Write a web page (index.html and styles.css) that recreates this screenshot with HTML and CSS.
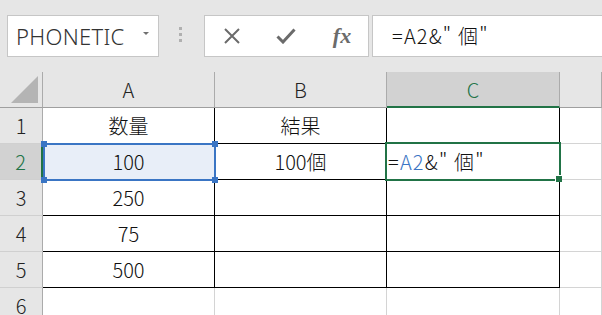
FILE: index.html
```html
<!DOCTYPE html>
<html lang="ja">

<head>
    <meta charset="UTF-8">
    <meta name="viewport" content="width=device-width, initial-scale=1.0">
    <title>Excel | 文字列の連結</title>
    <link rel="stylesheet" href="styles.css">
</head>

<body>
    <div class="toolbar">
        <div class="namebox">
            <span>PHONETIC</span>
            <span class="caret"></span>
        </div>
        <div class="grip"><i></i><i></i><i></i></div>
        <div class="fx-buttons">
            <span class="fx-btn">
                <svg width="18" height="16" viewBox="0 0 18 16">
                    <path d="M2 1 L16 15 M16 1 L2 15" stroke="#6b6b6b" stroke-width="2" fill="none" />
                </svg>
            </span>
            <span class="fx-btn">
                <svg width="20" height="16" viewBox="0 0 20 16">
                    <path d="M1.5 8.5 L7 14 L18.5 1.5" stroke="#6b6b6b" stroke-width="3" fill="none" />
                </svg>
            </span>
            <span class="fx-btn fx-label">fx</span>
        </div>
        <div class="formula">=A2&amp;" 個"</div>
    </div>

    <div class="sheet">
        <div class="head corner">
            <svg width="28" height="28" viewBox="0 0 28 28">
                <polygon points="27,0 27,27 0,27" fill="#b4b4b4" />
            </svg>
        </div>
        <div class="head">A</div>
        <div class="head">B</div>
        <div class="head active">C</div>
        <div class="head"></div>

        <div class="rowhead">1</div>
        <div class="cell table">数量</div>
        <div class="cell table">結果</div>
        <div class="cell table"></div>
        <div class="cell"></div>

        <div class="rowhead active">2</div>
        <div class="cell table ref">100</div>
        <div class="cell table">100個</div>
        <div class="cell table left">=<span class="ref-text">A2</span>&amp;" 個"</div>
        <div class="cell"></div>

        <div class="rowhead">3</div>
        <div class="cell table">250</div>
        <div class="cell table"></div>
        <div class="cell table"></div>
        <div class="cell"></div>

        <div class="rowhead">4</div>
        <div class="cell table">75</div>
        <div class="cell table"></div>
        <div class="cell table"></div>
        <div class="cell"></div>

        <div class="rowhead">5</div>
        <div class="cell table">500</div>
        <div class="cell table"></div>
        <div class="cell table"></div>
        <div class="cell"></div>

        <div class="rowhead">6</div>
        <div class="cell"></div>
        <div class="cell"></div>
        <div class="cell"></div>
        <div class="cell"></div>

        <!-- formula reference highlight on A2 -->
        <div class="ref-box">
            <i class="h tl"></i><i class="h tr"></i><i class="h bl"></i><i class="h br"></i>
        </div>
        <!-- active cell C2 -->
        <div class="sel-box"><i class="fill"></i></div>
    </div>
</body>

</html>
```

FILE: styles.css
```css
* {
    box-sizing: border-box;
}

body {
    margin: 0;
    background-color: #e6e6e6;
    font-family: "Noto Sans CJK JP", "Noto Sans", sans-serif;
    font-weight: 300;
    color: #111111;
    overflow: hidden;
}

.toolbar {
    display: flex;
    align-items: flex-start;
    height: 72px;
    padding: 15px 0 0 7px;
}

.namebox {
    display: flex;
    align-items: center;
    justify-content: space-between;
    width: 152px;
    height: 42px;
    padding: 0 9px 0 8px;
    background-color: #ffffff;
    border: 1px solid #c6c6c6;
    font-family: "Noto Sans", sans-serif;
    font-size: 22px;
    letter-spacing: 0.3px;
    color: #333333;
}

.caret {
    width: 0;
    height: 0;
    border-left: 3px solid transparent;
    border-right: 3px solid transparent;
    border-top: 3px solid #707070;
    margin-top: -6px;
}

.grip {
    display: flex;
    flex-direction: column;
    gap: 3px;
    margin: 12px 22px 0 20px;
}

.grip i {
    width: 3px;
    height: 3px;
    background-color: #b0b0b0;
}

.fx-buttons {
    display: flex;
    width: 165px;
    height: 42px;
    background-color: #ffffff;
    border: 1px solid #c6c6c6;
}

.fx-btn {
    display: flex;
    align-items: center;
    justify-content: center;
    width: 54px;
}

.fx-label {
    font-family: "Liberation Serif", serif;
    font-style: italic;
    font-weight: bold;
    font-size: 22px;
    color: #6b6b6b;
    padding-left: 4px;
}

.formula {
    flex: 1;
    height: 42px;
    margin-left: 3px;
    padding: 5px 0 0 19px;
    background-color: #ffffff;
    border: 1px solid #c6c6c6;
    border-right: none;
    font-size: 20px;
    letter-spacing: 1.2px;
    color: #111111;
}

.sheet {
    position: relative;
    display: grid;
    grid-template-columns: 43px 172px 172px 173px 1fr;
    grid-auto-rows: 36px;
    background-color: #ffffff;
}

.head,
.rowhead,
.cell {
    display: flex;
    align-items: center;
    justify-content: center;
    font-size: 20px;
}

.head {
    background-color: #e6e6e6;
    border-right: 1px solid #ababab;
    border-bottom: 1px solid #9f9f9f;
    color: #222222;
}

.corner {
    justify-content: flex-end;
    align-items: flex-end;
    padding: 0 3px 3px 0;
}

.head.active {
    background-color: #d2d2d2;
    color: #217346;
    border-bottom: 2px solid #217346;
}

.rowhead {
    background-color: #e6e6e6;
    border-right: 1px solid #ababab;
    border-bottom: 1px solid #d0d0d0;
    color: #222222;
}

.rowhead.active {
    background-color: #d2d2d2;
    color: #217346;
    border-right: 2px solid #217346;
}

.cell {
    border-right: 1px solid #d4d4d4;
    border-bottom: 1px solid #d4d4d4;
    color: #111111;
}

.cell.table {
    border-right-color: #000000;
    border-bottom-color: #000000;
}

.cell.ref {
    background-color: #e8eef8;
}

.cell.left {
    justify-content: flex-start;
    padding-left: 1px;
    letter-spacing: 1.2px;
}

.ref-text {
    color: #3a75c4;
}

.ref-box {
    position: absolute;
    left: 43px;
    top: 71px;
    width: 173px;
    height: 38px;
    border: 2px solid #3a75c4;
}

.h {
    position: absolute;
    width: 6px;
    height: 6px;
    background-color: #3a75c4;
}

.tl { left: -4px; top: -4px; }
.tr { right: -4px; top: -4px; }
.bl { left: -4px; bottom: -4px; }
.br { right: -4px; bottom: -4px; }

.sel-box {
    position: absolute;
    left: 385px;
    top: 70px;
    width: 176px;
    height: 39px;
    border: 2px solid #217346;
}

.fill {
    position: absolute;
    right: -3px;
    bottom: -3px;
    width: 7px;
    height: 7px;
    background-color: #217346;
    border-left: 1px solid #ffffff;
    border-top: 1px solid #ffffff;
}
```
